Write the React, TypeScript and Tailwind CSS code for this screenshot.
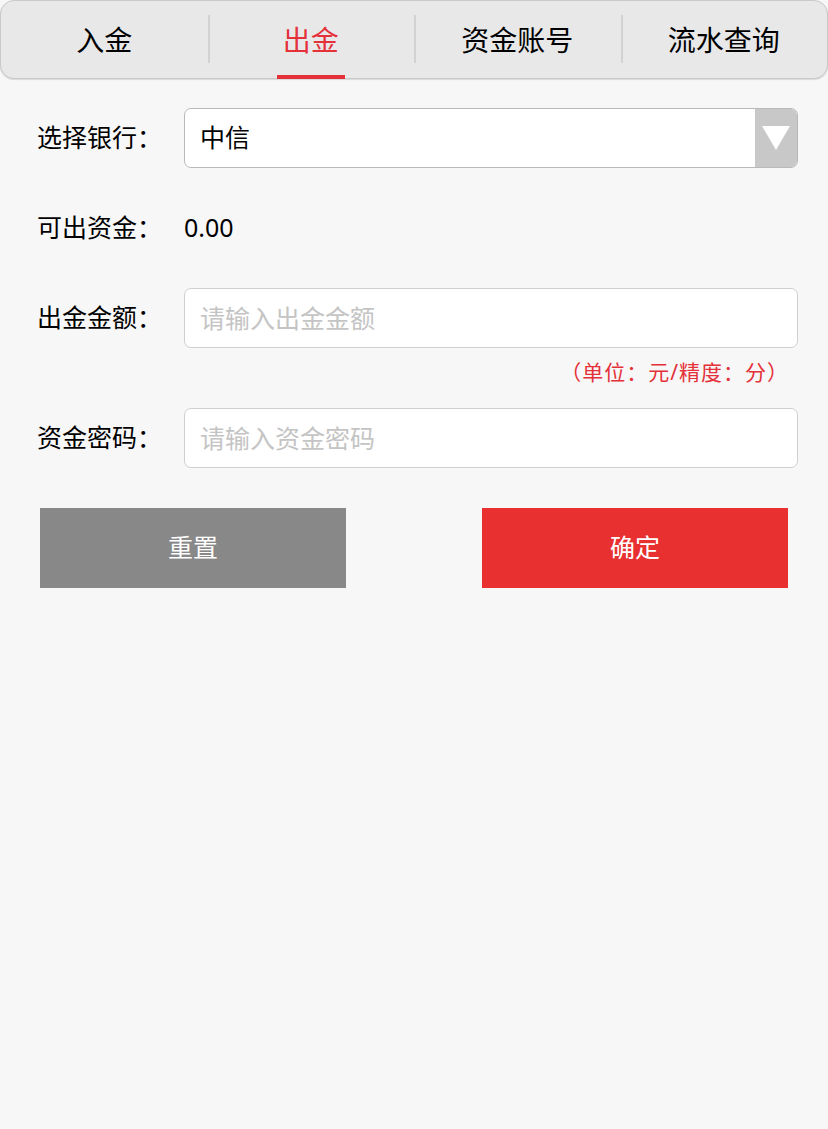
import { useState } from "react";

const tabs = ["入金", "出金", "资金账号", "流水查询"];

export default function App() {
  const [active, setActive] = useState(1);

  return (
    <div
      className="min-h-[1129px] w-full bg-[#f7f7f7] text-black"
      style={{ fontFamily: '"Noto Sans", "Noto Sans CJK SC", sans-serif' }}
    >
      {/* tab bar */}
      <div className="flex h-[79px] rounded-[14px] border border-[#c9c9c9] bg-[#e8e8e8] shadow-[0_1px_1px_rgba(0,0,0,0.12)]">
        {tabs.map((t, i) => (
          <div key={t} className="relative flex flex-1 items-center justify-center">
            {i > 0 && <div className="absolute left-0 top-[14px] h-[48px] w-[2px] bg-[#d2d2d2]" />}
            <span className={`text-[28px] leading-none ${active === i ? "text-[#e4313a]" : "text-black"}`} onClick={() => setActive(i)}>
              {t}
            </span>
            {active === i && <div className="absolute bottom-[-1px] h-[4px] w-[68px] bg-[#e4313a]" />}
          </div>
        ))}
      </div>

      <div className="flex flex-col px-[37px] pr-[30px] pt-[29px]">
        {/* bank select */}
        <div className="flex items-center">
          <span className="w-[147px] shrink-0 text-[25px]">选择银行：</span>
          <div className="flex h-[60px] flex-1 overflow-hidden rounded-[7px] border border-[#b9b9b9] bg-white">
            <span className="flex flex-1 items-center pl-[15px] text-[25px]">中信</span>
            <div className="flex w-[42px] items-center justify-center bg-[#c8c8c8]">
              <svg width="30" height="26" viewBox="0 0 30 26">
                <polygon points="1,1 29,1 15,25" fill="#ffffff" />
              </svg>
            </div>
          </div>
        </div>

        {/* available */}
        <div className="mt-[30px] flex h-[60px] items-center">
          <span className="w-[147px] shrink-0 text-[25px]">可出资金：</span>
          <span className="text-[25px]">0.00</span>
        </div>

        {/* amount */}
        <div className="mt-[30px] flex items-center">
          <span className="w-[147px] shrink-0 text-[25px]">出金金额：</span>
          <input
            className="h-[60px] flex-1 rounded-[7px] border border-[#cfcfcf] bg-white pl-[15px] text-[25px] outline-none placeholder:text-[#c4c4c4]"
            placeholder="请输入出金金额"
          />
        </div>
        <div className="mt-[9px] h-[30px] pr-[9px] text-right text-[21px] leading-[30px] tracking-[1px] text-[#e4313a]">（单位：元/精度：分）</div>

        {/* password */}
        <div className="mt-[21px] flex items-center">
          <span className="w-[147px] shrink-0 text-[25px]">资金密码：</span>
          <input
            type="password"
            className="h-[60px] flex-1 rounded-[7px] border border-[#cfcfcf] bg-white pl-[15px] text-[25px] outline-none placeholder:text-[#c4c4c4]"
            placeholder="请输入资金密码"
          />
        </div>

        {/* buttons */}
        <div className="mt-[40px] flex justify-between pl-[3px] pr-[10px]">
          <button className="h-[80px] w-[306px] bg-[#888888] text-[25px] text-white">重置</button>
          <button className="h-[80px] w-[306px] bg-[#e83030] text-[25px] text-white">确定</button>
        </div>
      </div>
    </div>
  );
}
